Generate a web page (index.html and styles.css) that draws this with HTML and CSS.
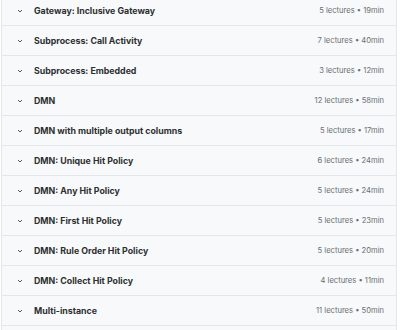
FILE: index.html
```html
<!DOCTYPE html>
<html>
<head>
<meta charset="utf-8">
<link rel="stylesheet" href="styles.css">
</head>
<body>
<div class="list">
  <div class="row"><div class="left"><svg class="chev" viewBox="0 0 6 4"><path d="M1 1l2 2 2-2"/></svg><span class="title">Gateway: Inclusive Gateway</span></div><span class="meta">5 lectures • 19min</span></div>
  <div class="row"><div class="left"><svg class="chev" viewBox="0 0 6 4"><path d="M1 1l2 2 2-2"/></svg><span class="title">Subprocess: Call Activity</span></div><span class="meta">7 lectures • 40min</span></div>
  <div class="row"><div class="left"><svg class="chev" viewBox="0 0 6 4"><path d="M1 1l2 2 2-2"/></svg><span class="title">Subprocess: Embedded</span></div><span class="meta">3 lectures • 12min</span></div>
  <div class="row"><div class="left"><svg class="chev" viewBox="0 0 6 4"><path d="M1 1l2 2 2-2"/></svg><span class="title">DMN</span></div><span class="meta">12 lectures • 58min</span></div>
  <div class="row"><div class="left"><svg class="chev" viewBox="0 0 6 4"><path d="M1 1l2 2 2-2"/></svg><span class="title">DMN with multiple output columns</span></div><span class="meta">5 lectures • 17min</span></div>
  <div class="row"><div class="left"><svg class="chev" viewBox="0 0 6 4"><path d="M1 1l2 2 2-2"/></svg><span class="title">DMN: Unique Hit Policy</span></div><span class="meta">6 lectures • 24min</span></div>
  <div class="row"><div class="left"><svg class="chev" viewBox="0 0 6 4"><path d="M1 1l2 2 2-2"/></svg><span class="title">DMN: Any Hit Policy</span></div><span class="meta">5 lectures • 24min</span></div>
  <div class="row"><div class="left"><svg class="chev" viewBox="0 0 6 4"><path d="M1 1l2 2 2-2"/></svg><span class="title">DMN: First Hit Policy</span></div><span class="meta">5 lectures • 23min</span></div>
  <div class="row"><div class="left"><svg class="chev" viewBox="0 0 6 4"><path d="M1 1l2 2 2-2"/></svg><span class="title">DMN: Rule Order Hit Policy</span></div><span class="meta">5 lectures • 20min</span></div>
  <div class="row"><div class="left"><svg class="chev" viewBox="0 0 6 4"><path d="M1 1l2 2 2-2"/></svg><span class="title">DMN: Collect Hit Policy</span></div><span class="meta">4 lectures • 11min</span></div>
  <div class="row"><div class="left"><svg class="chev" viewBox="0 0 6 4"><path d="M1 1l2 2 2-2"/></svg><span class="title">Multi-instance</span></div><span class="meta">11 lectures • 50min</span></div>
  <div class="row"><div class="left"></div><span class="meta"></span></div>
</div>
</body>
</html>
```

FILE: styles.css
```css
html, body {
  margin: 0;
  padding: 0;
  background: #ffffff;
  overflow: hidden;
}
.list {
  margin: -4px 0 0 1px;
  width: 396px;
  box-sizing: border-box;
  border-left: 1px solid #e4e8eb;
  border-right: 1px solid #e4e8eb;
  font-family: "Inter", "Liberation Sans", sans-serif;
}
.row {
  height: 29px;
  border-bottom: 1px solid #e4e8eb;
  background: #f7f9fa;
  display: flex;
  align-items: center;
  justify-content: space-between;
  padding: 0 12px 0 15px;
}
.left {
  display: flex;
  align-items: center;
  gap: 11px;
}
.chev {
  width: 6px;
  height: 4px;
  fill: none;
  stroke: #55595c;
  stroke-width: 1;
}
.title {
  font-size: 8.8px;
  font-weight: 700;
  color: #2d2f31;
}
.meta {
  font-size: 7.6px;
  color: #6a6f73;
}
```
